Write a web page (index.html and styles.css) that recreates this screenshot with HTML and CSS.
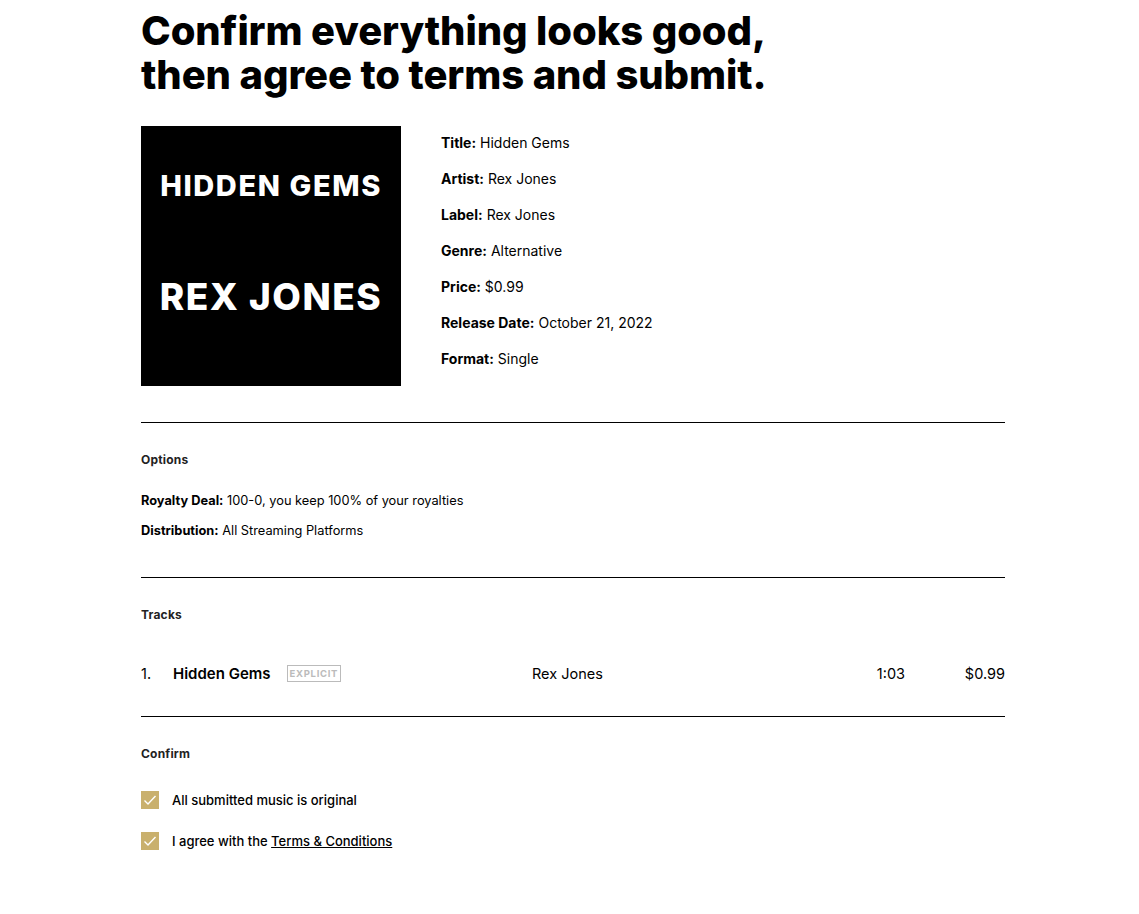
FILE: index.html
```html
<!DOCTYPE html>
<html lang="en">
  <head>
    <meta charset="UTF-8" />
    <meta name="viewport" content="width=device-width, initial-scale=1.0" />
    <title>Review release</title>
    <link rel="stylesheet" href="styles.css">
  </head>
  <body>
    <main class="review">
      <h1>Confirm everything looks good,<br />then agree to terms and submit.</h1>

      <section class="release">
        <div class="cover">
          <span class="cover-title">HIDDEN GEMS</span>
          <span class="cover-artist">REX JONES</span>
        </div>
        <ul class="details">
          <li><b>Title:</b> Hidden Gems</li>
          <li><b>Artist:</b> Rex Jones</li>
          <li><b>Label:</b> Rex Jones</li>
          <li><b>Genre:</b> Alternative</li>
          <li><b>Price:</b> $0.99</li>
          <li><b>Release Date:</b> October 21, 2022</li>
          <li><b>Format:</b> Single</li>
        </ul>
      </section>

      <section class="block options">
        <h3>Options</h3>
        <p class="option"><b>Royalty Deal:</b> 100-0, you keep 100% of your royalties</p>
        <p class="option"><b>Distribution:</b> All Streaming Platforms</p>
      </section>

      <section class="block">
        <h3>Tracks</h3>
        <div class="track">
          <span class="num">1.</span>
          <span class="name">Hidden Gems <span class="explicit">EXPLICIT</span></span>
          <span class="artist">Rex Jones</span>
          <span class="time">1:03</span>
          <span class="price">$0.99</span>
        </div>
      </section>

      <section class="block last">
        <h3>Confirm</h3>
        <label class="check">
          <span class="box"><svg viewBox="0 0 18 18" width="18" height="18"><path d="M3.5 9.5l3.5 3.5 7.5-8" fill="none" stroke="#fff" stroke-width="1.4"/></svg></span>
          <span>All submitted music is original</span>
        </label>
        <label class="check">
          <span class="box"><svg viewBox="0 0 18 18" width="18" height="18"><path d="M3.5 9.5l3.5 3.5 7.5-8" fill="none" stroke="#fff" stroke-width="1.4"/></svg></span>
          <span>I agree with the <a href="#">Terms &amp; Conditions</a></span>
        </label>
      </section>
    </main>
  </body>
</html>
```

FILE: styles.css
```css
body {
  margin: 0;
  font-family: "Inter", "Liberation Sans", sans-serif;
  color: #000;
  background: #fff;
}

.review {
  width: 864px;
  margin-left: 141px;
  padding-top: 9px;
}

h1 {
  margin: 0;
  font-size: 40px;
  line-height: 44px;
  font-weight: 800;
  letter-spacing: -0.1px;
}

.release {
  display: flex;
  gap: 40px;
  margin-top: 29px;
  padding-bottom: 36px;
  border-bottom: 1px solid #000;
}

.cover {
  width: 260px;
  height: 260px;
  flex-shrink: 0;
  background: #000;
  color: #fff;
  font-family: "Inter", sans-serif;
  font-weight: 800;
  display: flex;
  flex-direction: column;
  align-items: center;
}

.cover-title {
  margin-top: 40px;
  font-size: 29px;
  line-height: 40px;
  letter-spacing: 1.6px;
}

.cover-artist {
  margin-top: 68px;
  font-size: 37px;
  line-height: 46px;
  letter-spacing: 1.5px;
}

.details {
  list-style: none;
  margin: 0;
  padding: 6px 0 0;
  font-size: 14px;
}

.details li {
  line-height: 22px;
  margin-bottom: 14px;
}

b {
  font-weight: 700;
}

.block {
  border-bottom: 1px solid #000;
  padding-top: 29px;
}

.block.last {
  border-bottom: none;
}

h3 {
  margin: 0;
  font-size: 12px;
  font-weight: 700;
  line-height: 16px;
  letter-spacing: 0.2px;
  color: #222;
}

.option {
  margin: 0 0 12px;
  font-size: 12.8px;
  line-height: 18px;
}

.option:first-of-type {
  margin-top: 24px;
}

.options {
  padding-bottom: 25px;
}

.track {
  display: grid;
  grid-template-columns: 32px 359px 1fr 80px 100px;
  align-items: center;
  height: 86px;
  margin-top: 7px;
  font-size: 14.5px;
}

.track .name {
  font-size: 15px;
  font-weight: 600;
  display: flex;
  align-items: center;
}

.explicit {
  margin-left: 16px;
  border: 1px solid #bbb;
  color: #bbb;
  font-size: 9.5px;
  font-weight: 700;
  letter-spacing: 0.7px;
  padding: 1px 2px;
  line-height: 13px;
}

.time,
.price {
  text-align: right;
}

.check {
  display: flex;
  align-items: center;
  gap: 13px;
  font-size: 13px;
  font-weight: 500;
  margin-top: 29px;
}

.check + .check {
  margin-top: 23px;
}

.box {
  width: 18px;
  height: 18px;
  background: #c9b06d;
  display: block;
}

.box svg {
  display: block;
}

.check a {
  color: #000;
}
```
